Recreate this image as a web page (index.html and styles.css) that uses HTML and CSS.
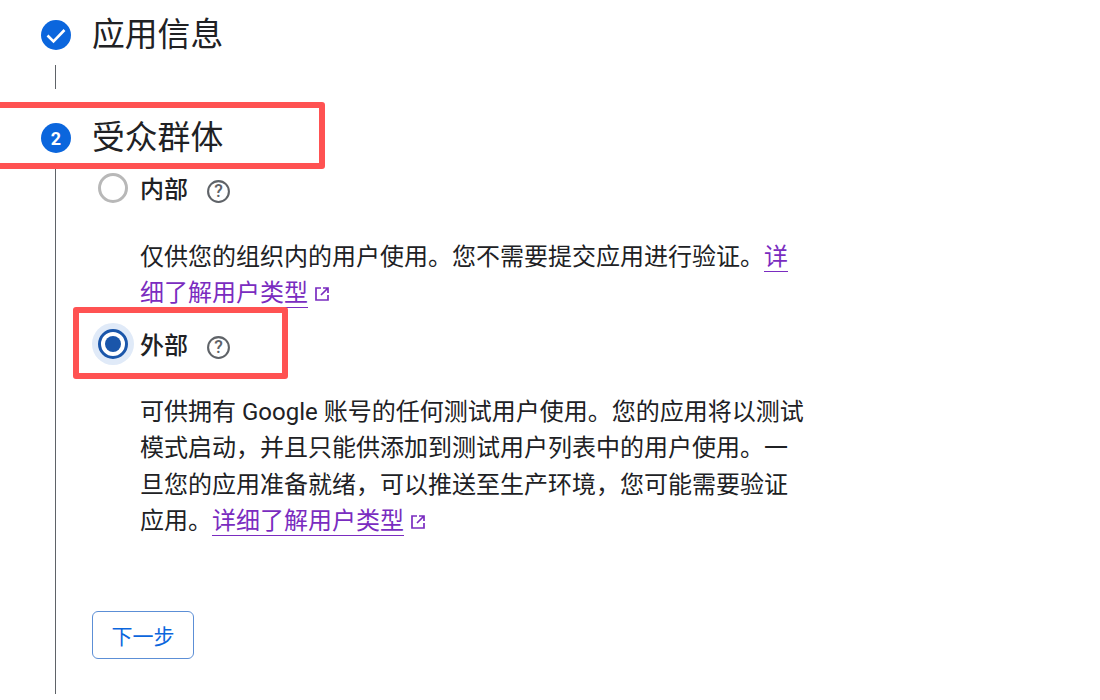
FILE: index.html
```html
<!DOCTYPE html>
<html lang="zh-CN">
<head>
  <meta charset="UTF-8">
  <title>受众群体</title>
  <link rel="stylesheet" href="styles.css">
</head>
<body>

  <div class="step step-first">
    <span class="step-icon">
      <svg viewBox="0 0 30 30" width="30" height="30"><path d="M6.5 15.5l6 6 11-11.5" fill="none" stroke="#fff" stroke-width="2.6"/></svg>
    </span>
    <h2>应用信息</h2>
  </div>
  <div class="connector"></div>

  <div class="step step-current">
    <span class="step-icon">2</span>
    <h2>受众群体</h2>
    <div class="mark mark-step"></div>
  </div>

  <div class="step-body">
    <div class="option option-first">
      <span class="radio"></span>
      <span class="option-label">内部</span>
      <svg class="help" viewBox="0 0 24 24" width="25" height="25"><circle cx="12" cy="12" r="10" fill="none" stroke="#5f6368" stroke-width="2"/><text x="12" y="17.5" text-anchor="middle">?</text></svg>
    </div>
    <p class="desc desc-short">仅供您的组织内的用户使用。您不需要提交应用进行验证。<a href="#">详细了解用户类型</a><svg class="ext" viewBox="0 0 18 18" width="18" height="18"><path d="M8 3H3v12h12v-5M10 3h5v5M15 3L8 10" fill="none" stroke="#7a2cc0" stroke-width="1.7"/></svg></p>

    <div class="option">
      <span class="radio radio-on"></span>
      <span class="option-label">外部</span>
      <svg class="help" viewBox="0 0 24 24" width="25" height="25"><circle cx="12" cy="12" r="10" fill="none" stroke="#5f6368" stroke-width="2"/><text x="12" y="17.5" text-anchor="middle">?</text></svg>
      <div class="mark mark-option"></div>
    </div>
    <p class="desc desc-long">可供拥有 Google 账号的任何测试用户使用。您的应用将以测试模式启动，并且只能供添加到测试用户列表中的用户使用。一旦您的应用准备就绪，可以推送至生产环境，您可能需要验证应用。<a href="#">详细了解用户类型</a><svg class="ext" viewBox="0 0 18 18" width="18" height="18"><path d="M8 3H3v12h12v-5M10 3h5v5M15 3L8 10" fill="none" stroke="#7a2cc0" stroke-width="1.7"/></svg></p>

    <button class="next">下一步</button>
  </div>

</body>
</html>
```

FILE: styles.css
```css
body {
  margin: 0;
  height: 700px;
  overflow: hidden;
  background: #fff;
  color: #202124;
  font-family: Roboto, "Noto Sans CJK SC", sans-serif;
}

.step {
  position: relative;
  display: flex;
  align-items: center;
  gap: 21px;
  padding-left: 41px;
  height: 50px;
}

.step-first {
  margin-top: 10px;
}

.step-current {
  margin-top: 24px;
}

.step h2 {
  margin: 0;
  font-size: 32.8px;
  font-weight: 400;
  line-height: 46px;
}

.step-icon {
  display: flex;
  align-items: center;
  justify-content: center;
  width: 30px;
  height: 30px;
  border-radius: 50%;
  background: #0b66dd;
  color: #fff;
  font-size: 18px;
  font-weight: 700;
}

.connector {
  width: 1px;
  height: 24px;
  margin: 5px 0 0 55px;
  background: #5f6368;
}

.step-body {
  height: 528px;
  margin: 6px 0 0 55px;
  border-left: 1px solid #5f6368;
  padding-left: 36px;
}

.option {
  position: relative;
  display: flex;
  align-items: center;
  height: 44px;
}

.option-first {
  margin-top: -3px;
}

.radio {
  box-sizing: border-box;
  width: 30px;
  height: 30px;
  margin: 0 12px 0 6px;
  border: 3px solid #b8b8b8;
  border-radius: 50%;
  background: #fff;
}

.radio-on {
  border-color: #1a56aa;
  background: #1a56aa;
  background-clip: content-box;
  padding: 4px;
  box-shadow: 0 0 0 6px #e0eaf8;
}

.option-label {
  margin-top: 4px;
  font-size: 24px;
  font-weight: 500;
  line-height: 44px;
}

.help {
  margin-left: 18px;
  margin-top: 7px;
}

.help text {
  font-family: Roboto, sans-serif;
  font-size: 17px;
  font-weight: 500;
  fill: #5f6368;
}

.desc {
  width: 665px;
  margin: 0 0 0 48px;
  font-size: 24px;
  line-height: 36.4px;
}

.desc-short {
  margin-top: 29px;
  margin-bottom: 10px;
}

.desc-long {
  margin-top: 28px;
}

.desc a {
  color: #7a2cc0;
  text-decoration: none;
  border-bottom: 1.5px solid #7a2cc0;
}

.ext {
  margin-left: 5px;
  vertical-align: -2px;
}

.next {
  display: block;
  width: 102px;
  height: 48px;
  margin-top: 72px;
  padding: 0;
  border: 1px solid #5c8fd6;
  border-radius: 6px;
  background: #fff;
  color: #0b66dd;
  font-family: inherit;
  font-size: 21px;
  font-weight: 400;
}

.mark {
  position: absolute;
  box-sizing: border-box;
  border: 6px solid #ff5252;
  border-radius: 3px;
  pointer-events: none;
}

.mark-step {
  left: -6px;
  top: -11px;
  width: 331px;
  height: 67px;
}

.mark-option {
  left: -19px;
  top: -15px;
  width: 215px;
  height: 72px;
}
```
